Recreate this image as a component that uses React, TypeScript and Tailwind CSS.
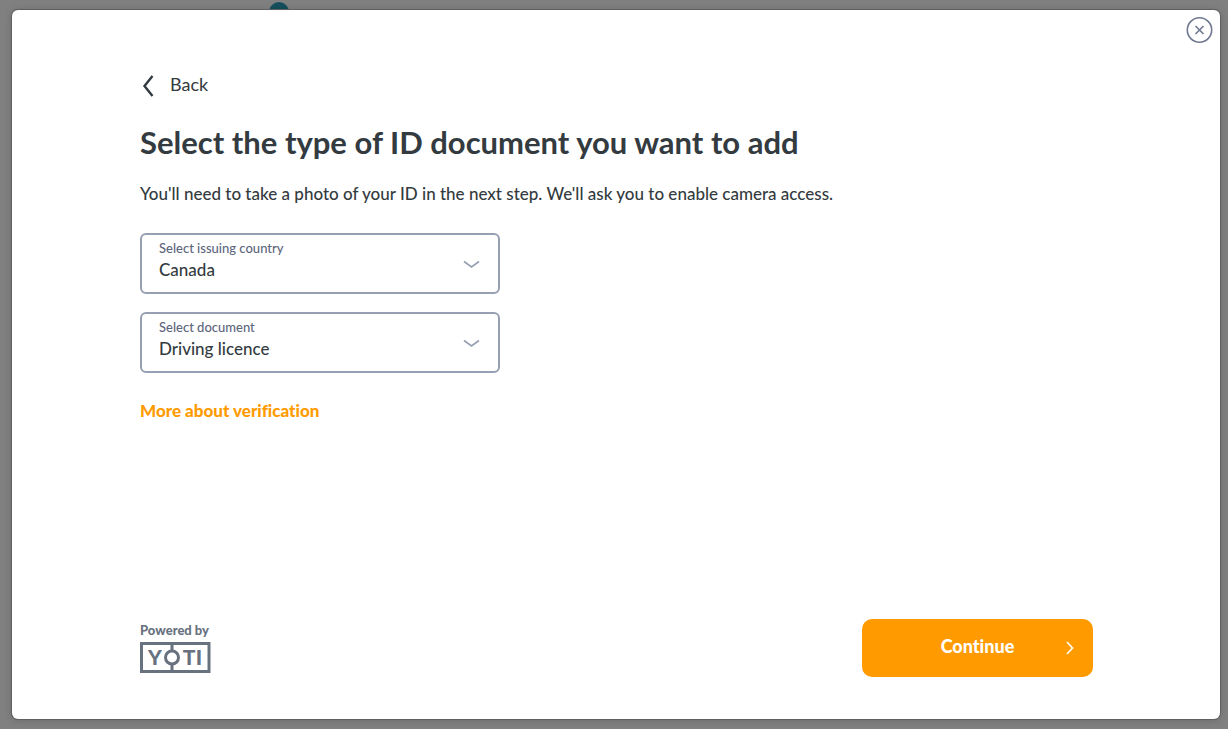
import { ReactNode } from 'react';

interface SelectFieldProps {
  id: string;
  label: string;
  options: string[];
}

function SelectField({ id, label, options }: SelectFieldProps) {
  return (
    <div className="grid w-full max-w-[360px]">
      <select
        id={id}
        className="col-start-1 row-start-1 h-[61px] w-full appearance-none rounded-md border-2 border-[#96a0b2] bg-white pt-3 pr-12 pl-[17px] text-[17px] font-medium text-[#333b40]"
      >
        {options.map((option) => (
          <option key={option}>{option}</option>
        ))}
      </select>
      <label
        htmlFor={id}
        className="pointer-events-none col-start-1 row-start-1 self-start pt-1.5 pl-[19px] text-[13px] leading-[18px] font-medium text-[#5d667c]"
      >
        {label}
      </label>
      <svg
        className="pointer-events-none col-start-1 row-start-1 mt-0.5 mr-5 self-center justify-self-end"
        width="17"
        height="9"
        viewBox="0 0 17 9"
        fill="none"
        stroke="#96a0b2"
        strokeWidth="1.7"
      >
        <path d="M1 1.5 L8.5 7 L16 1.5" />
      </svg>
    </div>
  );
}

function YotiLogo() {
  return (
    <svg width="71" height="31" viewBox="0 0 71 31" role="img" aria-label="Yoti">
      <rect x="1.5" y="1.5" width="67.5" height="28" fill="none" stroke="#68727f" strokeWidth="3" />
      <path d="M32 2 V9 M32 22 V29" stroke="#68727f" strokeWidth="3" />
      <circle cx="32" cy="15.5" r="6.5" fill="none" stroke="#68727f" strokeWidth="3" />
      <g fill="#68727f" fontFamily="Lato, sans-serif" fontSize="21" fontWeight="900" textAnchor="middle">
        <text x="15" y="23">Y</text>
        <text x="49" y="23">T</text>
        <text x="59" y="23">I</text>
      </g>
    </svg>
  );
}

function Modal({ children }: { children: ReactNode }) {
  return (
    <div className="relative z-10 flex flex-1 flex-col rounded-md bg-white pt-[62px] pr-[127px] pb-[42px] pl-32 shadow-[0_0_0_1px_#5f6060,0_1px_8px_#0003]">
      <button type="button" aria-label="Close" className="absolute top-1.5 right-[7px]">
        <svg width="28" height="28" viewBox="0 0 28 28" fill="none" stroke="#6f7890">
          <circle cx="14.5" cy="14" r="12.2" strokeWidth="1.6" />
          <path d="M10.5 10 L18.5 18 M18.5 10 L10.5 18" strokeWidth="1.6" />
        </svg>
      </button>
      {children}
    </div>
  );
}

export default function App() {
  return (
    <div className="relative flex min-h-screen bg-[#808080] pt-2.5 pr-2 pb-2.5 pl-3 font-['Lato',sans-serif] text-[#333b40] [font-variant-ligatures:none]">
      {/* Step marker of the page behind the modal */}
      <div className="absolute top-0.5 left-[269px] size-5 rounded-full bg-[#154f5d]" />

      <Modal>
        <button type="button" className="flex items-center gap-4 self-start text-lg leading-6">
          <svg width="14" height="22" viewBox="0 0 14 22" fill="none" stroke="#333b40" strokeWidth="2.4">
            <path d="M12.5 1 L4.5 11 L12.5 21" />
          </svg>
          <span className="pb-1">Back</span>
        </button>

        <h1 className="mt-[22px] text-[31px] leading-10 font-bold">
          Select the type of ID document you want to add
        </h1>
        <p className="mt-[18px] text-[17px] leading-7 font-medium">
          You'll need to take a photo of your ID in the next step. We'll ask you to enable camera access.
        </p>

        <div className="mt-[25px] flex flex-col gap-[18px]">
          <SelectField id="country" label="Select issuing country" options={['Canada']} />
          <SelectField id="document" label="Select document" options={['Driving licence']} />
        </div>

        <a href="#verification" className="mt-6 self-start text-[17px] leading-7 font-black text-[#ff9b00]">
          More about verification
        </a>

        <div className="mt-auto flex items-end justify-between">
          <div className="flex flex-col gap-1 pb-1">
            <span className="text-[13px] leading-4 font-black text-[#68727f]">Powered by</span>
            <YotiLogo />
          </div>
          <button
            type="button"
            className="grid h-[58px] w-[231px] grid-cols-[1fr_auto_1fr] items-center rounded-[10px] bg-[#ff9b00] pb-1 text-lg font-black text-white"
          >
            <span className="col-start-2">Continue</span>
            <svg
              className="mt-1 mr-[19px] justify-self-end"
              width="8"
              height="14"
              viewBox="0 0 8 14"
              fill="none"
              stroke="#ffffff"
              strokeWidth="1.6"
            >
              <path d="M1 1 L6.5 7 L1 13" />
            </svg>
          </button>
        </div>
      </Modal>
    </div>
  );
}
